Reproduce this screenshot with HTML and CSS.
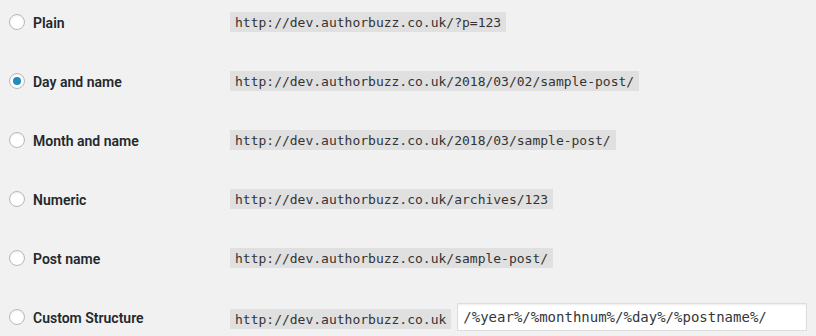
FILE: index.html
```html
<!DOCTYPE html>
<html>
<head>
<meta charset="utf-8">
<link rel="stylesheet" href="styles.css">
</head>
<body>
<div class="permalinks">
  <div class="row">
    <label class="opt"><span class="radio"></span><span class="name">Plain</span></label>
    <div class="value"><code class="url">http://dev.authorbuzz.co.uk/?p=123</code></div>
  </div>
  <div class="row">
    <label class="opt"><span class="radio checked"></span><span class="name">Day and name</span></label>
    <div class="value"><code class="url">http://dev.authorbuzz.co.uk/2018/03/02/sample-post/</code></div>
  </div>
  <div class="row">
    <label class="opt"><span class="radio"></span><span class="name">Month and name</span></label>
    <div class="value"><code class="url">http://dev.authorbuzz.co.uk/2018/03/sample-post/</code></div>
  </div>
  <div class="row">
    <label class="opt"><span class="radio"></span><span class="name">Numeric</span></label>
    <div class="value"><code class="url">http://dev.authorbuzz.co.uk/archives/123</code></div>
  </div>
  <div class="row">
    <label class="opt"><span class="radio"></span><span class="name">Post name</span></label>
    <div class="value"><code class="url">http://dev.authorbuzz.co.uk/sample-post/</code></div>
  </div>
  <div class="row">
    <label class="opt"><span class="radio"></span><span class="name">Custom Structure</span></label>
    <div class="value custom"><code class="url">http://dev.authorbuzz.co.uk</code><input class="structure" type="text" value="/%year%/%monthnum%/%day%/%postname%/"></div>
  </div>
</div>
</body>
</html>
```

FILE: styles.css
```css
html, body {
  margin: 0;
  padding: 0;
  background: #f1f1f1;
}
body {
  font-family: Roboto, "Liberation Sans", sans-serif;
  color: #23282d;
  font-size: 14px;
}
.permalinks {
  display: flex;
  flex-direction: column;
  gap: 15px;
}
.row {
  height: 44px;
  display: grid;
  grid-template-columns: 230px 1fr;
  align-items: center;
}
.opt {
  display: flex;
  align-items: center;
  padding-left: 9px;
  font-weight: 600;
  font-size: 14px;
  line-height: 20px;
}
.name {
  padding-top: 2px;
}
.radio {
  box-sizing: border-box;
  width: 16px;
  height: 16px;
  border-radius: 50%;
  border: 1px solid #b4b9be;
  background: #fff;
  box-shadow: inset 0 1px 2px rgba(0,0,0,.07);
  margin-right: 8px;
  display: flex;
  align-items: center;
  justify-content: center;
}
.radio.checked::before {
  content: "";
  width: 8px;
  height: 8px;
  border-radius: 50%;
  background: #1e8cbe;
}
.value {
  display: flex;
  align-items: center;
}
.url {
  font-family: "DejaVu Sans Mono", monospace;
  font-size: 13px;
  line-height: 15px;
  padding: 3px 5px 2px;
  background: rgba(0,0,0,.07);
  color: #333;
}
.custom {
  gap: 6px;
}
.custom .url {
  margin-top: 4px;
}
.structure {
  box-sizing: border-box;
  width: 350px;
  height: 28px;
  margin: 0;
  padding: 0 5px;
  border: 1px solid #ddd;
  box-shadow: inset 0 1px 2px rgba(0,0,0,.07);
  background: #fff;
  color: #32373c;
  font-family: "DejaVu Sans Mono", monospace;
  font-size: 14px;
  outline: none;
}
```
